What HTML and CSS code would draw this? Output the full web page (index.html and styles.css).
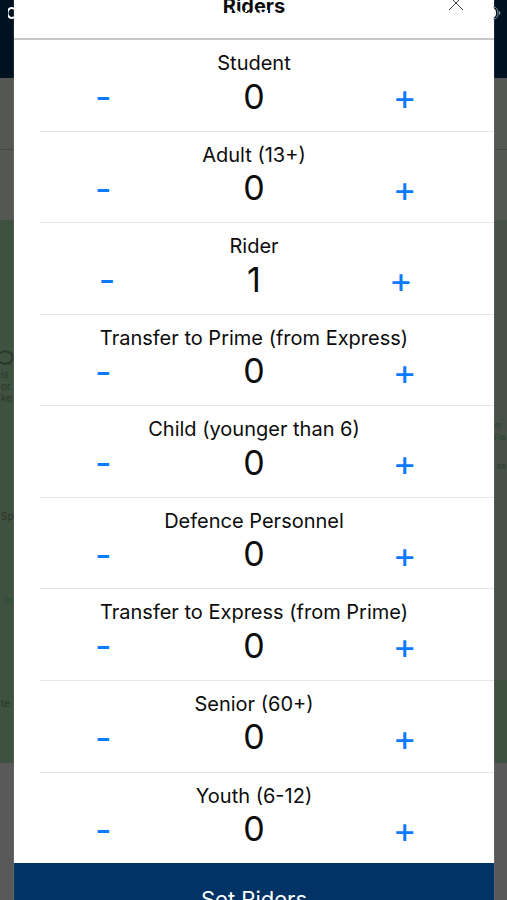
FILE: index.html
```html
<!DOCTYPE html>
<html lang="en">
<head>
    <meta charset="UTF-8">
    <meta name="viewport" content="width=device-width, initial-scale=1.0">
    <title>Riders</title>
    <link rel="stylesheet" href="styles.css">
</head>
<body>
    <div class="screen">
        <div class="backdrop">
            <div class="navbar"></div>
            <div class="search-row"></div>
            <div class="search-row"></div>
            <div class="map">
                <div class="park"></div>
                <svg class="map-pin" viewBox="0 0 14 16"><path d="M0 3 L5 1 L11 3 L13 8 L10 13 L4 14 L0 12" /></svg>
                <span class="place place-island">is<br>or<br>ke</span>
                <span class="place place-spring">Sp</span>
                <span class="place place-thin">in</span>
                <span class="place place-gate">te</span>
                <span class="place place-field">er<br>Fle</span>
                <span class="place place-road">os</span>
            </div>
            <div class="tray"></div>
        </div>

        <div class="modal">
            <div class="modal-header">
                <h2>Riders</h2>
                <button class="close" aria-label="Close">
                    <svg viewBox="0 0 16 16"><path d="M1 1 L15 15 M15 1 L1 15" /></svg>
                </button>
            </div>
            <div class="rider-list" id="rider-list">
                <div class="rider">
                    <span class="name">Student</span>
                    <div class="stepper">
                        <button aria-label="Remove Student">-</button>
                        <span class="count">0</span>
                        <button aria-label="Add Student">+</button>
                    </div>
                </div>
                <div class="rider">
                    <span class="name">Adult (13+)</span>
                    <div class="stepper">
                        <button aria-label="Remove Adult">-</button>
                        <span class="count">0</span>
                        <button aria-label="Add Adult">+</button>
                    </div>
                </div>
                <div class="rider">
                    <span class="name">Rider</span>
                    <div class="stepper">
                        <button aria-label="Remove Rider">-</button>
                        <span class="count">1</span>
                        <button aria-label="Add Rider">+</button>
                    </div>
                </div>
                <div class="rider">
                    <span class="name">Transfer to Prime (from Express)</span>
                    <div class="stepper">
                        <button aria-label="Remove Transfer to Prime">-</button>
                        <span class="count">0</span>
                        <button aria-label="Add Transfer to Prime">+</button>
                    </div>
                </div>
                <div class="rider">
                    <span class="name">Child (younger than 6)</span>
                    <div class="stepper">
                        <button aria-label="Remove Child">-</button>
                        <span class="count">0</span>
                        <button aria-label="Add Child">+</button>
                    </div>
                </div>
                <div class="rider">
                    <span class="name">Defence Personnel</span>
                    <div class="stepper">
                        <button aria-label="Remove Defence Personnel">-</button>
                        <span class="count">0</span>
                        <button aria-label="Add Defence Personnel">+</button>
                    </div>
                </div>
                <div class="rider">
                    <span class="name">Transfer to Express (from Prime)</span>
                    <div class="stepper">
                        <button aria-label="Remove Transfer to Express">-</button>
                        <span class="count">0</span>
                        <button aria-label="Add Transfer to Express">+</button>
                    </div>
                </div>
                <div class="rider">
                    <span class="name">Senior (60+)</span>
                    <div class="stepper">
                        <button aria-label="Remove Senior">-</button>
                        <span class="count">0</span>
                        <button aria-label="Add Senior">+</button>
                    </div>
                </div>
                <div class="rider">
                    <span class="name">Youth (6-12)</span>
                    <div class="stepper">
                        <button aria-label="Remove Youth">-</button>
                        <span class="count">0</span>
                        <button aria-label="Add Youth">+</button>
                    </div>
                </div>
            </div>
            <button class="submit">Set Riders</button>
        </div>

        <div class="status-bar">
            <svg class="carrier" viewBox="0 0 12 14"><path d="M6 3 A4 5 0 1 0 6 11" /></svg>
            <svg class="clock" viewBox="0 0 64 10"><path d="M7 2 L7 8 M13 3 L16 1 M21 2 L25 5 M30 1 L30 3 M36 4 L40 1 M44 2 L47 5 M51 1 L51 5 M56 1 L60 4" /></svg>
            <svg class="battery" viewBox="0 0 26 14">
                <path class="battery-case" d="M17 1 Q22 1 22 7 T17 13" />
                <path class="battery-level" d="M14 3 H18 Q20 3 20 7 T18 11 H14 Z" />
                <path class="battery-tip" d="M23 5 Q26 7 23 9 Z" />
            </svg>
        </div>
    </div>

    <script>
        // minus is the first button of a stepper, plus is the last
        document.getElementById('rider-list').addEventListener('click', function (event) {
            const button = event.target.closest('button');
            if (!button) {
                return;
            }
            const count = button.parentElement.querySelector('.count');
            const step = button.textContent === '+' ? 1 : -1;
            count.textContent = Math.max(0, Number(count.textContent) + step);
        });
    </script>
</body>
</html>
```
FILE: styles.css
```css
* {
    box-sizing: border-box;
}
body {
    margin: 0;
    font-family: Inter, "Liberation Sans", sans-serif;
    color: #0c0c0c;
}
button {
    border: none;
    padding: 0;
    background: none;
    font-family: inherit;
    cursor: pointer;
}
.screen {
    position: relative;
    display: flex;
    height: 100vh;
    padding: 0 13px 0 14px;
    overflow: hidden;
}

/* dimmed page behind the modal */
.backdrop {
    position: absolute;
    inset: 0;
    display: flex;
    flex-direction: column;
    background: #595959;
}
.navbar {
    height: 78px;
    background: #001122;
}
.search-row {
    height: 72px;
    background: #555753;
    border-bottom: 1px solid #464846;
}
.search-row + .search-row {
    height: 70px;
    border-bottom: none;
}
.map {
    position: relative;
    flex: 1;
    background: #3f513f;
}
.tray {
    height: 137px;
    background: #595959;
}
.park {
    position: absolute;
    top: 0;
    right: 0;
    width: 14px;
    height: 460px;
    background: #485148;
}
.place {
    position: absolute;
    font-size: 10px;
    line-height: 12px;
    color: #2a382b;
}
.map-pin {
    position: absolute;
    top: 130px;
    left: 0;
    width: 14px;
    height: 16px;
    fill: none;
    stroke: #2a382b;
    stroke-width: 2;
}
.place-island {
    top: 148px;
    left: 1px;
}
.place-spring {
    top: 290px;
    left: 1px;
}
.place-thin {
    top: 374px;
    left: 4px;
    color: #1f4d33;
}
.place-gate {
    top: 477px;
    left: 1px;
}
.place-field {
    top: 199px;
    right: 0;
    width: 13px;
    font-size: 8px;
    color: #24452a;
}
.place-road {
    top: 240px;
    right: 1px;
    font-size: 8px;
}

.modal {
    position: relative;
    flex: 1;
    display: flex;
    flex-direction: column;
    background: #fff;
    box-shadow: 0 0 1px #999;
}
.modal-header {
    position: relative;
    height: 40px;
    border-bottom: 2px solid #c8c8c8;
}
.modal-header h2 {
    margin: -6px 0 0;
    font-size: 20px;
    line-height: 24px;
    font-weight: 700;
    text-align: center;
}
.close {
    position: absolute;
    top: -5px;
    right: 30px;
    width: 16px;
    height: 16px;
}
.close svg {
    display: block;
    fill: none;
    stroke: #444;
    stroke-width: 1;
}
.rider-list {
    flex: 1;
    display: flex;
    flex-direction: column;
    padding-left: 26px;
}
.rider {
    flex: 1;
    box-sizing: content-box;
    padding-right: 26px;
    border-bottom: 1px solid #e6e6e6;
    text-align: center;
}
.rider:last-child {
    border-bottom: none;
}
.name {
    display: block;
    padding-top: 10px;
    font-size: 20px;
    line-height: 26px;
}
.stepper {
    display: flex;
    justify-content: center;
    align-items: center;
    gap: 128px;
}
.count {
    font-size: 34px;
    line-height: 40px;
}
.stepper button {
    width: 24px;
    padding-top: 1px;
    font-size: 36px;
    line-height: 40px;
    color: #0a7aff;
}
.submit {
    height: 37px;
    padding-top: 22px;
    overflow: hidden;
    background: #003366;
    color: #fff;
    font-size: 22px;
    line-height: 28px;
}

/* sits over everything, white on the dark bar */
.status-bar {
    position: absolute;
    top: 6px;
    left: 8px;
    right: 5px;
    display: flex;
    justify-content: space-between;
    pointer-events: none;
}
.carrier {
    width: 12px;
    height: 14px;
    fill: none;
    stroke: #fff;
    stroke-width: 2;
}
.clock {
    width: 64px;
    height: 10px;
    margin-top: 3px;
    fill: none;
    stroke: #fff;
    stroke-width: 2;
}
.battery {
    width: 26px;
    height: 14px;
}
.battery-case {
    fill: none;
    stroke: #8b98a3;
}
.battery-level {
    fill: #fff;
}
.battery-tip {
    fill: #8b98a3;
}
```
